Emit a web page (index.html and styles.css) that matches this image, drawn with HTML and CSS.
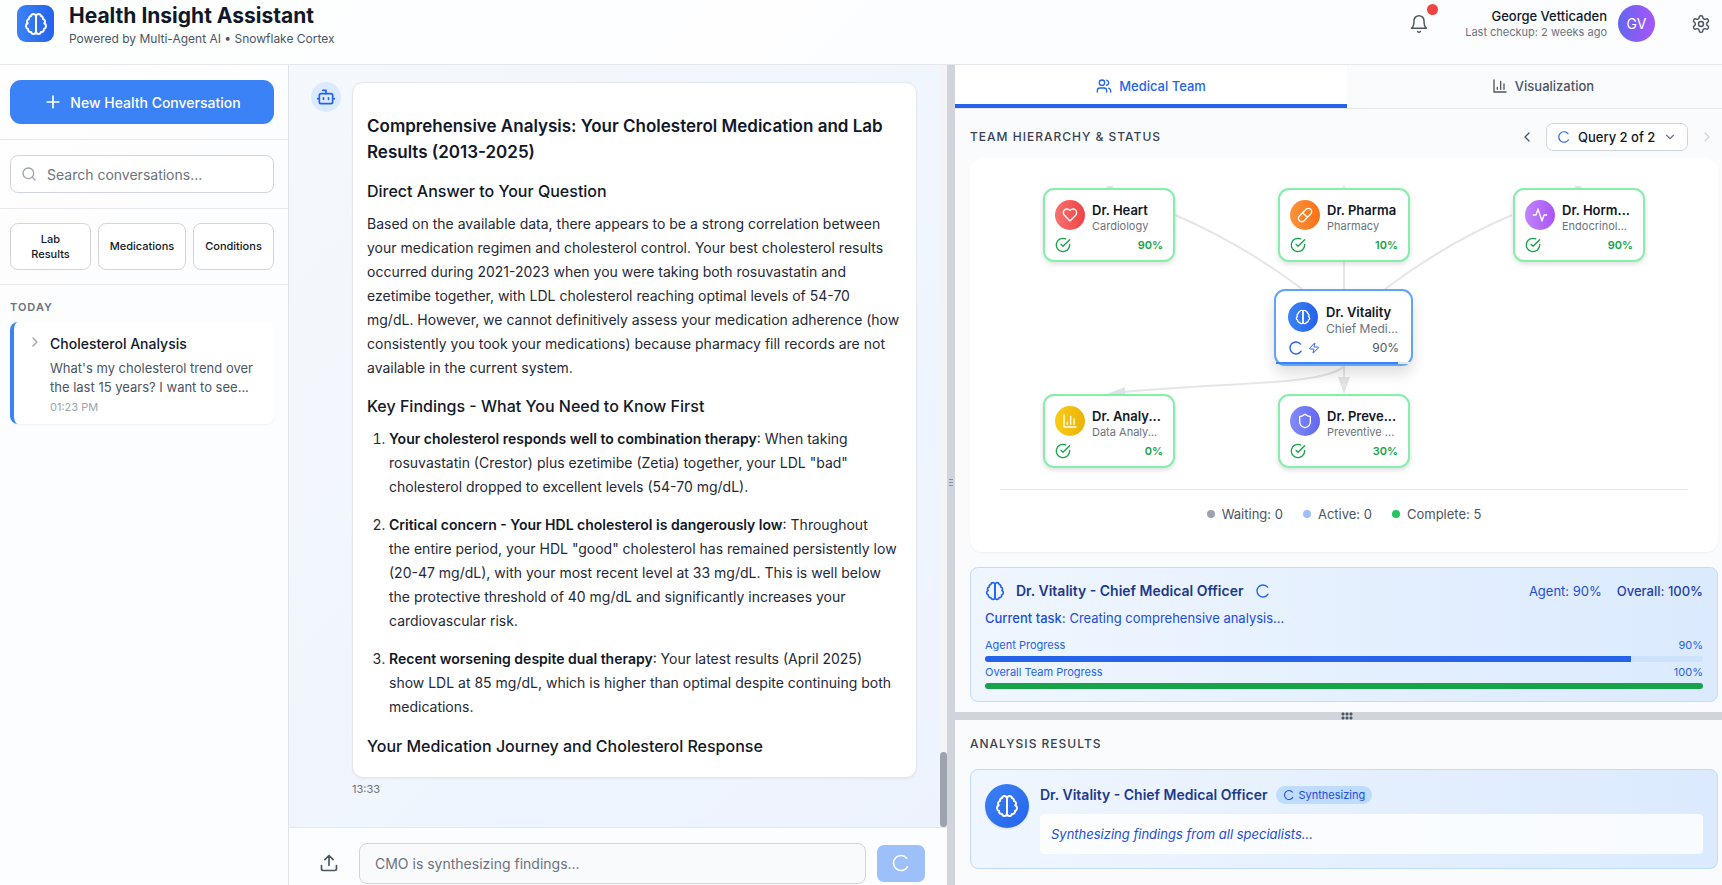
FILE: index.html
```html
<!DOCTYPE html>
<html lang="en">
<head>
<meta charset="utf-8">
<title>Health Insight Assistant</title>
<meta name="viewport" content="width=device-width, initial-scale=1">
<link rel="stylesheet" href="styles.css">
</head>
<body>
<svg class="sprite" aria-hidden="true">
  <symbol id="brain" viewBox="0 0 24 24"><path d="M9.5 2A2.5 2.5 0 0 1 12 4.5v15a2.5 2.5 0 0 1-4.96.44 2.5 2.5 0 0 1-2.96-3.08 3 3 0 0 1-.34-5.58 2.5 2.5 0 0 1 1.32-4.24 2.5 2.5 0 0 1 1.98-3A2.5 2.5 0 0 1 9.5 2Z"/><path d="M14.5 2A2.5 2.5 0 0 0 12 4.5v15a2.5 2.5 0 0 0 4.96.44 2.5 2.5 0 0 0 2.96-3.08 3 3 0 0 0 .34-5.58 2.5 2.5 0 0 0-1.32-4.24 2.5 2.5 0 0 0-1.98-3A2.5 2.5 0 0 0 14.5 2Z"/></symbol>
  <symbol id="bell" viewBox="0 0 24 24"><path d="M6 8a6 6 0 0 1 12 0c0 7 3 9 3 9H3s3-2 3-9"/><path d="M10.3 21a1.94 1.94 0 0 0 3.4 0"/></symbol>
  <symbol id="settings" viewBox="0 0 24 24"><path d="M12.22 2h-.44a2 2 0 0 0-2 2v.18a2 2 0 0 1-1 1.73l-.43.25a2 2 0 0 1-2 0l-.15-.08a2 2 0 0 0-2.73.73l-.22.38a2 2 0 0 0 .73 2.73l.15.1a2 2 0 0 1 1 1.72v.51a2 2 0 0 1-1 1.74l-.15.09a2 2 0 0 0-.73 2.73l.22.38a2 2 0 0 0 2.73.73l.15-.08a2 2 0 0 1 2 0l.43.25a2 2 0 0 1 1 1.73V20a2 2 0 0 0 2 2h.44a2 2 0 0 0 2-2v-.18a2 2 0 0 1 1-1.73l.43-.25a2 2 0 0 1 2 0l.15.08a2 2 0 0 0 2.73-.73l.22-.39a2 2 0 0 0-.73-2.73l-.15-.08a2 2 0 0 1-1-1.74v-.5a2 2 0 0 1 1-1.74l.15-.09a2 2 0 0 0 .73-2.73l-.22-.38a2 2 0 0 0-2.73-.73l-.15.08a2 2 0 0 1-2 0l-.43-.25a2 2 0 0 1-1-1.73V4a2 2 0 0 0-2-2z"/><circle cx="12" cy="12" r="3"/></symbol>
  <symbol id="plus" viewBox="0 0 24 24"><path d="M5 12h14M12 5v14"/></symbol>
  <symbol id="search" viewBox="0 0 24 24"><circle cx="11" cy="11" r="8"/><path d="m21 21-4.3-4.3"/></symbol>
  <symbol id="right" viewBox="0 0 24 24"><path d="m9 18 6-6-6-6"/></symbol>
  <symbol id="left" viewBox="0 0 24 24"><path d="m15 18-6-6 6-6"/></symbol>
  <symbol id="down" viewBox="0 0 24 24"><path d="m6 9 6 6 6-6"/></symbol>
  <symbol id="bot" viewBox="0 0 24 24"><path d="M12 8V4H8"/><rect width="16" height="12" x="4" y="8" rx="2"/><path d="M2 14h2M20 14h2M15 13v2M9 13v2"/></symbol>
  <symbol id="upload" viewBox="0 0 24 24"><path d="M21 15v4a2 2 0 0 1-2 2H5a2 2 0 0 1-2-2v-4M17 8l-5-5-5 5M12 3v12"/></symbol>
  <symbol id="loader" viewBox="0 0 24 24"><path d="M21 12a9 9 0 1 1-6.219-8.56" transform="rotate(32 12 12)"/></symbol>
  <symbol id="users" viewBox="0 0 24 24"><path d="M16 21v-2a4 4 0 0 0-4-4H6a4 4 0 0 0-4 4v2"/><circle cx="9" cy="7" r="4"/><path d="M22 21v-2a4 4 0 0 0-3-3.87M16 3.13a4 4 0 0 1 0 7.75"/></symbol>
  <symbol id="chart" viewBox="0 0 24 24"><path d="M3 3v18h18M18 17V9M13 17V5M8 17v-3"/></symbol>
  <symbol id="check" viewBox="0 0 24 24"><path d="M22 11.08V12a10 10 0 1 1-5.93-9.14"/><path d="m9 11 3 3L22 4"/></symbol>
  <symbol id="heart" viewBox="0 0 24 24"><path d="M19 14c1.49-1.46 3-3.21 3-5.5A5.5 5.5 0 0 0 16.5 3c-1.76 0-3 .5-4.5 2-1.5-1.5-2.74-2-4.5-2A5.5 5.5 0 0 0 2 8.5c0 2.3 1.5 4.05 3 5.5l7 7Z"/></symbol>
  <symbol id="pill" viewBox="0 0 24 24"><path d="m10.5 20.5 10-10a4.95 4.95 0 1 0-7-7l-10 10a4.95 4.95 0 1 0 7 7ZM8.5 8.5l7 7"/></symbol>
  <symbol id="activity" viewBox="0 0 24 24"><path d="M22 12h-4l-3 9L9 3l-3 9H2"/></symbol>
  <symbol id="shield" viewBox="0 0 24 24"><path d="M20 13c0 5-3.5 7.5-7.66 8.95a1 1 0 0 1-.67-.01C7.5 20.5 4 18 4 13V6a1 1 0 0 1 1-1c2 0 4.5-1.2 6.24-2.72a1.17 1.17 0 0 1 1.52 0C14.51 3.81 17 5 19 5a1 1 0 0 1 1 1z"/></symbol>
  <symbol id="zap" viewBox="0 0 24 24"><path d="M4 14a1 1 0 0 1-.78-1.63l9.9-10.2a.5.5 0 0 1 .86.46l-1.92 6.02A1 1 0 0 0 13 10h7a1 1 0 0 1 .78 1.63l-9.9 10.2a.5.5 0 0 1-.86-.46l1.92-6.02A1 1 0 0 0 11 14z"/></symbol>
</svg>

<header class="topbar">
  <div class="logo"><svg class="icon i24"><use href="#brain"/></svg></div>
  <div class="brand">
    <h1 class="brand-name">Health Insight Assistant</h1>
    <p class="brand-sub">Powered by Multi-Agent AI • Snowflake Cortex</p>
  </div>
  <button class="icon-btn bell" aria-label="Notifications"><svg class="icon i20"><use href="#bell"/></svg><span class="bell-dot"></span></button>
  <div class="user">
    <span class="user-name">George Vetticaden</span>
    <span class="user-sub">Last checkup: 2 weeks ago</span>
  </div>
  <div class="avatar">GV</div>
  <button class="icon-btn gear" aria-label="Settings"><svg class="icon i20"><use href="#settings"/></svg></button>
</header>

<div class="workspace">
  <aside class="sidebar">
    <div class="side-block">
      <button class="new-btn"><svg class="icon i20"><use href="#plus"/></svg>New Health Conversation</button>
    </div>
    <div class="side-block">
      <label class="search">
        <svg class="icon i16"><use href="#search"/></svg>
        <input type="text" aria-label="Search conversations" placeholder="Search conversations...">
      </label>
    </div>
    <div class="side-block chips">
      <button class="chip">Lab Results</button>
      <button class="chip">Medications</button>
      <button class="chip">Conditions</button>
    </div>
    <div class="history">
      <h2 class="history-title">Today</h2>
      <article class="convo">
        <svg class="icon i16 convo-arrow"><use href="#right"/></svg>
        <div>
          <h3 class="convo-title">Cholesterol Analysis</h3>
          <p class="convo-text">What's my cholesterol trend over the last 15 years? I want to see...</p>
          <time class="convo-time">01:23 PM</time>
        </div>
      </article>
    </div>
  </aside>

  <main class="chat">
    <div class="messages">
      <div class="thread">
        <div class="bot"><svg class="icon i20"><use href="#bot"/></svg></div>
        <div class="message">
          <div class="bubble">
            <h2>Comprehensive Analysis: Your Cholesterol Medication and Lab Results (2013-2025)</h2>
            <h3>Direct Answer to Your Question</h3>
            <p>Based on the available data, there appears to be a strong correlation between your medication regimen and cholesterol control. Your best cholesterol results occurred during 2021-2023 when you were taking both rosuvastatin and ezetimibe together, with LDL cholesterol reaching optimal levels of 54-70 mg/dL. However, we cannot definitively assess your medication adherence (how consistently you took your medications) because pharmacy fill records are not available in the current system.</p>
            <h3>Key Findings - What You Need to Know First</h3>
            <ol>
              <li><strong>Your cholesterol responds well to combination therapy</strong>: When taking rosuvastatin (Crestor) plus ezetimibe (Zetia) together, your LDL "bad" cholesterol dropped to excellent levels (54-70 mg/dL).</li>
              <li><strong>Critical concern - Your HDL cholesterol is dangerously low</strong>: Throughout<br>the entire period, your HDL "good" cholesterol has remained persistently low (20-47 mg/dL), with your most recent level at 33 mg/dL. This is well below the protective threshold of 40 mg/dL and significantly increases your cardiovascular risk.</li>
              <li><strong>Recent worsening despite dual therapy</strong>: Your latest results (April 2025) show LDL at 85 mg/dL, which is higher than optimal despite continuing both medications.</li>
            </ol>
            <h3>Your Medication Journey and Cholesterol Response</h3>
          </div>
          <time class="stamp">13:33</time>
        </div>
      </div>
      <div class="scroll-track"><div class="scroll-thumb"></div></div>
    </div>
    <form class="composer">
      <button type="button" class="icon-btn attach" aria-label="Upload"><svg class="icon i20"><use href="#upload"/></svg></button>
      <input class="composer-input" type="text" aria-label="Message" placeholder="CMO is synthesizing findings...">
      <button type="button" class="send" aria-label="Send"><svg class="icon i20"><use href="#loader"/></svg></button>
    </form>
  </main>

  <div class="split-v"><span class="grip-v"></span></div>

  <div class="right">
   <div class="right-inner">
    <nav class="tabs">
      <button class="tab tab-on"><svg class="icon i16"><use href="#users"/></svg>Medical Team</button>
      <button class="tab"><svg class="icon i16"><use href="#chart"/></svg>Visualization</button>
    </nav>

    <section class="team">
      <div class="team-head">
        <h2 class="section-title">Team Hierarchy &amp; Status</h2>
        <button class="icon-btn step" aria-label="Previous query"><svg class="icon i16"><use href="#left"/></svg></button>
        <div class="query">
          <svg class="icon i14 blue"><use href="#loader"/></svg>
          <select aria-label="Query"><option>Query 2 of 2</option></select>
          <svg class="icon i14 gray"><use href="#down"/></svg>
        </div>
        <button class="icon-btn step step-off" aria-label="Next query"><svg class="icon i16"><use href="#right"/></svg></button>
      </div>

      <div class="board">
        <div class="canvas">
          <svg class="links" width="620" height="316" viewBox="1034 173 620 316">
            <path d="M1107 187h6M1344 186v4M1575 187h6M1175 215C1215 232 1262 259 1302 289M1512 215C1472 232 1425 259 1385 289M1344 260V290M1344 366V378M1344 366C1326 385 1235 382 1124 392"/>
            <path class="tip" d="M1338 377h12l-6 17zM1125 387v12l-18-5z"/>
          </svg>
          <div class="node n-heart">
            <span class="face red"><svg class="icon i16"><use href="#heart"/></svg></span>
            <div class="who"><b>Dr. Heart</b><span>Cardiology</span></div>
            <div class="state"><svg class="icon i16"><use href="#check"/></svg><em>90%</em></div>
          </div>
          <div class="node n-pharma">
            <span class="face orange"><svg class="icon i16"><use href="#pill"/></svg></span>
            <div class="who"><b>Dr. Pharma</b><span>Pharmacy</span></div>
            <div class="state"><svg class="icon i16"><use href="#check"/></svg><em>10%</em></div>
          </div>
          <div class="node n-horm">
            <span class="face purple"><svg class="icon i16"><use href="#activity"/></svg></span>
            <div class="who"><b>Dr. Horm...</b><span>Endocrinol...</span></div>
            <div class="state"><svg class="icon i16"><use href="#check"/></svg><em>90%</em></div>
          </div>
          <div class="node n-chief">
            <span class="face navy"><svg class="icon i16"><use href="#brain"/></svg></span>
            <div class="who"><b>Dr. Vitality</b><span>Chief Medi...</span></div>
            <div class="state"><svg class="icon i16"><use href="#loader"/></svg><svg class="icon i12"><use href="#zap"/></svg><em>90%</em></div>
            <div class="node-bar"><i style="width:90%"></i></div>
          </div>
          <div class="node n-data">
            <span class="face yellow"><svg class="icon i16"><use href="#chart"/></svg></span>
            <div class="who"><b>Dr. Analy...</b><span>Data Analy...</span></div>
            <div class="state"><svg class="icon i16"><use href="#check"/></svg><em>0%</em></div>
          </div>
          <div class="node n-prev">
            <span class="face indigo"><svg class="icon i16"><use href="#shield"/></svg></span>
            <div class="who"><b>Dr. Preve...</b><span>Preventive ...</span></div>
            <div class="state"><svg class="icon i16"><use href="#check"/></svg><em>30%</em></div>
          </div>
        </div>
        <ul class="legend">
          <li><i class="dot dot-wait"></i>Waiting: 0</li>
          <li><i class="dot dot-act"></i>Active: 0</li>
          <li><i class="dot dot-done"></i>Complete: 5</li>
        </ul>
      </div>

      <div class="panel chief">
        <div class="chief-head">
          <svg class="icon i20 blue"><use href="#brain"/></svg>
          <h3 class="panel-title">Dr. Vitality - Chief Medical Officer</h3>
          <svg class="icon i16 blue"><use href="#loader"/></svg>
          <span class="agent-pct">Agent: 90%</span>
          <span class="overall-pct">Overall: 100%</span>
        </div>
        <p class="task"><b>Current task:</b> Creating comprehensive analysis...</p>
        <div class="meter-label"><span>Agent Progress</span><span>90%</span></div>
        <div class="meter"><i style="width:90%"></i></div>
        <div class="meter-label"><span>Overall Team Progress</span><span>100%</span></div>
        <div class="meter meter-green"><i style="width:100%"></i></div>
      </div>
    </section>

    <div class="split-h"><span class="grip"></span></div>

    <section class="results">
      <h2 class="section-title">Analysis Results</h2>
      <div class="panel result">
        <span class="result-face"><svg class="icon i24"><use href="#brain"/></svg></span>
        <div class="result-body">
          <div class="result-head">
            <h3 class="panel-title">Dr. Vitality - Chief Medical Officer</h3>
            <span class="badge"><svg class="icon i12"><use href="#loader"/></svg>Synthesizing</span>
          </div>
          <p class="finding">Synthesizing findings from all specialists...</p>
        </div>
      </div>
    </section>
   </div>
  </div>
</div>
</body>
</html>
```
FILE: styles.css
```css
* { box-sizing: border-box; margin: 0; padding: 0; }
body {
  height: 100vh;
  display: flex;
  flex-direction: column;
  overflow: hidden;
  font-family: Inter, "Liberation Sans", sans-serif;
  font-size: 14px;
  color: #111827;
  background: linear-gradient(135deg, #f7f9fb 0%, #eff5fe 50%, #ebeefb 100%);
}
button, input, select { font: inherit; color: inherit; }
button { background: none; border: 0; cursor: pointer; }
i, em { font-style: normal; }
.sprite { display: none; }
.icon { flex: none; display: block; fill: none; stroke: currentColor; stroke-width: 2; stroke-linecap: round; stroke-linejoin: round; }
.i12 { width: 12px; height: 12px; }
.i14 { width: 14px; height: 14px; }
.i16 { width: 16px; height: 16px; }
.i20 { width: 20px; height: 20px; }
.i24 { width: 24px; height: 24px; }
.blue { color: #2563eb; }
.gray { color: #6b7280; }
.icon-btn { display: flex; align-items: center; justify-content: center; color: #4b5563; }

/* Top bar */
.topbar {
  flex: none;
  display: flex;
  align-items: center;
  height: 65px;
  padding: 0 11px 17px 17px;
  background: rgba(255, 255, 255, 0.8);
  border-bottom: 1px solid #e5e7eb;
}
.topbar .i20 { stroke-width: 1.75; }
.logo { display: flex; align-items: center; justify-content: center; width: 37px; height: 37px; border-radius: 9px; color: #fff; background: linear-gradient(90deg, #3b82f6, #2563eb); }
.brand { margin-left: 15px; margin-right: auto; padding-top: 2px; }
.brand-name { font-size: 21px; line-height: 28px; font-weight: 700; }
.brand-sub { font-size: 12px; line-height: 18px; color: #4b5563; }
.bell { position: relative; width: 37px; height: 37px; margin-right: 28px; }
.bell-dot { position: absolute; top: -1px; right: -1px; width: 11px; height: 11px; border-radius: 50%; background: #ef4444; }
.user { display: flex; flex-direction: column; text-align: right; margin-right: 11px; }
.user-name { font-size: 13px; line-height: 18px; font-weight: 500; }
.user-sub { font-size: 11px; line-height: 15px; color: #6b7280; }
.avatar { display: flex; align-items: center; justify-content: center; width: 37px; height: 37px; border-radius: 50%; color: #fff; background: linear-gradient(90deg, #6366f1, #a855f7); margin-right: 36px; }

.workspace { flex: 1; min-height: 0; display: flex; }

/* Sidebar */
.sidebar { flex: none; width: 289px; border-right: 1px solid #e0e4ea; background: rgba(255, 255, 255, 0.75); }
.side-block { padding: 15px 14px 15px 10px; border-bottom: 1px solid #e5e7eb; }
.new-btn { display: flex; align-items: center; justify-content: center; gap: 7px; width: 100%; height: 44px; border-radius: 11px; background: #3b82f6; color: #fff; font-size: 14px; font-weight: 500; }
.search { display: flex; align-items: center; gap: 10px; height: 38px; padding: 0 10px; border: 1px solid #d1d5db; border-radius: 8px; background: #fff; color: #9ca3af; }
.search input { flex: 1; min-width: 0; border: 0; outline: 0; background: none; font-size: 14px; }
input::placeholder { color: #6b7280; opacity: 1; }
.side-block.chips { display: grid; grid-template-columns: 81px 88px 81px; justify-content: space-between; padding-top: 14px; padding-bottom: 14px; }
.chip { height: 47px; padding: 0 14px; border: 1px solid #d1d5db; border-radius: 8px; background: #fff; font-size: 11px; line-height: 15px; font-weight: 500; display: flex; align-items: center; justify-content: center; }
.history { padding: 15px 14px 0 10px; }
.history-title { font-size: 11px; line-height: 15px; font-weight: 600; letter-spacing: 1px; text-transform: uppercase; color: #6b7280; margin-bottom: 7px; }
.convo { display: flex; gap: 7px; padding: 12px 14px 9px 13px; border-left: 4px solid #3b82f6; border-radius: 8px; background: #fff; box-shadow: 0 1px 2px rgba(0, 0, 0, 0.05); }
.convo-arrow { color: #9ca3af; }
.convo-title { font-size: 14px; line-height: 20px; font-weight: 500; margin-bottom: 5px; }
.convo-text { font-size: 13px; line-height: 19px; color: #4b5563; margin-bottom: 3px; }
.convo-time { display: block; font-size: 11px; line-height: 15px; color: #9ca3af; }

/* Chat */
.chat { flex: 658; min-width: 0; display: flex; flex-direction: column; }
.messages { flex: 1; min-height: 0; display: flex; overflow: hidden; }
.thread { flex: 1; min-width: 0; display: flex; align-items: flex-start; gap: 11px; padding: 17px 23px 0 22px; }
.bot { flex: none; display: flex; align-items: center; justify-content: center; width: 30px; height: 30px; border-radius: 50%; background: #dbeafe; color: #2563eb; }
.message { flex: 1; min-width: 0; }
.bubble { padding: 30px 16px 10px 14px; border: 1px solid #e5e7eb; border-radius: 11px; background: #fff; color: #1f2937; line-height: 24px; box-shadow: 0 1px 2px rgba(0, 0, 0, 0.05); }
.bubble h2 { font-size: 17px; line-height: 26px; font-weight: 600; color: #111827; margin-bottom: 13px; }
.bubble h3 { font-size: 16px; line-height: 26px; font-weight: 500; color: #111827; margin-bottom: 8px; }
.bubble p { margin-bottom: 13px; }
.bubble ol { padding-left: 22px; margin-bottom: 14px; }
.bubble li + li { margin-top: 14px; }
.bubble strong { font-weight: 600; color: #111827; }
.stamp { display: block; font-size: 11px; line-height: 15px; margin-top: 4px; color: #6b7280; }
.scroll-track { flex: none; width: 7px; display: flex; align-items: flex-end; background: #f3f4f6; }
.scroll-thumb { width: 7px; height: 75px; border-radius: 4px; background: #9ca3af; }
.composer { flex: none; height: 58px; display: flex; align-items: center; padding: 14px 22px 1px 30px; border-top: 1px solid #e5e7eb; background: rgba(255, 255, 255, 0.8); }
.attach { width: 20px; height: 37px; margin-right: 20px; }
.composer-input { flex: 1; min-width: 0; height: 41px; padding: 0 15px; border: 1px solid #d1d5db; border-radius: 8px; background: #f9fafb; font-size: 14px; outline: 0; margin-right: 11px; }
.send { width: 48px; height: 37px; display: flex; align-items: center; justify-content: center; border-radius: 7px; background: #9dc0fb; color: #fff; }

/* Splitters */
.split-v { flex: none; width: 8px; display: flex; align-items: center; justify-content: center; padding-top: 15px; background: #d1d5db; }
.split-h { flex: none; height: 8px; display: flex; align-items: center; justify-content: center; background: #d1d5db; }
.grip { width: 12px; height: 8px; background: radial-gradient(circle, #4b5563 1px, transparent 2px) 0 0 / 4px 4px; }
.grip-v { width: 4px; height: 7px; background: repeating-linear-gradient(#8b93a0 0 1px, transparent 1px 3px); }

/* Right pane: slightly wider than its slot, clipped by the window edge */
.right { flex: 767; min-width: 0; overflow: hidden; background: #fafbfd; }
.right-inner { width: calc(100% + 17px); height: 100%; display: flex; flex-direction: column; }
.tabs { flex: none; display: flex; height: 44px; border-bottom: 1px solid #e5e7eb; }
.tab { flex: 1; display: flex; align-items: center; justify-content: center; gap: 7px; font-size: 13px; font-weight: 500; color: #4b5563; border-bottom: 4px solid transparent; padding-top: 2px; }
.tab-on { color: #2563eb; background: #fff; border-bottom-color: #2563eb; }
.team { flex: none; padding: 14px 21px 10px 15px; }
.team-head { display: flex; align-items: center; height: 28px; margin-bottom: 7px; }
.section-title { font-size: 12px; line-height: 18px; font-weight: 500; letter-spacing: 1px; text-transform: uppercase; color: #374151; margin-right: auto; }
.step { width: 16px; height: 28px; }
.step-off { color: #d1d5db; margin-right: 3px; }
.query { display: flex; align-items: center; gap: 7px; height: 28px; margin: 0 11px; padding: 0 10px; border: 1px solid #d1d5db; border-radius: 7px; background: #fff; }
.query select { appearance: none; border: 0; outline: 0; background: none; font-size: 13px; font-weight: 500; }
.board { padding: 15px 30px 29px; border-radius: 12px; background: #fff; box-shadow: 0 1px 2px rgba(0, 0, 0, 0.05); margin-bottom: 15px; }
.canvas { position: relative; height: 317px; border-bottom: 1px solid #e5e7eb; }
.links { position: absolute; top: 0; left: calc(50% - 310px); fill: none; stroke: #e5e5ea; stroke-width: 2; }
.links .tip { fill: #e2e3e8; stroke: none; }
.node { position: absolute; width: 132px; height: 74px; display: grid; grid-template-columns: 30px 1fr; gap: 3px 7px; align-content: start; padding: 10px; border: 2px solid #86efac; border-radius: 11px; background: #fff; box-shadow: 0 2px 5px rgba(0, 0, 0, 0.14); }
.n-heart { left: calc(50% - 301px); top: 15px; }
.n-pharma { left: calc(50% - 66px); top: 15px; }
.n-horm { left: calc(50% + 169px); top: 15px; }
.n-data { left: calc(50% - 301px); top: 221px; }
.n-prev { left: calc(50% - 66px); top: 221px; }
.n-chief { left: calc(50% - 70px); top: 116px; width: 139px; height: 77px; padding: 11px 12px; column-gap: 8px; border-color: #60a5fa; box-shadow: 0 8px 14px rgba(0, 0, 0, 0.13); }
.face { display: flex; align-items: center; justify-content: center; width: 30px; height: 30px; border-radius: 50%; color: #fff; }
.red { background: linear-gradient(90deg, #f87171, #ef4444); }
.orange { background: linear-gradient(90deg, #fb923c, #f97316); }
.purple { background: linear-gradient(90deg, #c084fc, #a855f7); }
.navy { background: linear-gradient(90deg, #3b82f6, #2563eb); }
.yellow { background: linear-gradient(90deg, #facc15, #eab308); }
.indigo { background: linear-gradient(90deg, #818cf8, #6366f1); }
.who { min-width: 0; display: flex; flex-direction: column; padding-top: 1px; white-space: nowrap; }
.who b { font-size: 13px; line-height: 18px; font-weight: 600; }
.who span { font-size: 11px; line-height: 15px; color: #6b7280; }
.state { grid-column: 1 / 3; display: flex; align-items: center; gap: 4px; line-height: 16px; color: #16a34a; }
.state em { margin-left: auto; font-size: 11px; font-weight: 600; }
.n-chief .who span { font-size: 12px; line-height: 16px; }
.n-chief .state { color: #2563eb; }
.n-chief em { color: #4b5563; font-size: 12px; font-weight: 400; }
.node-bar { position: absolute; left: 0; right: 0; bottom: 0; height: 2px; background: #e5e7eb; }
.node-bar i { display: block; height: 2px; background: #3b82f6; }
.legend { display: flex; justify-content: center; gap: 20px; padding-top: 15px; list-style: none; font-size: 13px; line-height: 18px; color: #4b5563; }
.legend li { display: flex; align-items: center; gap: 7px; }
.dot { width: 8px; height: 8px; border-radius: 50%; }
.dot-wait { background: #9ca3af; }
.dot-act { background: #9dc0fb; }
.dot-done { background: #22c55e; }

.panel { border: 1px solid #bfdbfe; border-radius: 8px; background: linear-gradient(90deg, #eff6ff, #dbeafe); }
.panel-title { font-size: 14px; line-height: 20px; font-weight: 600; color: #1e3a8a; }
.chief { padding: 13px 14px 9px; color: #2563eb; }
.chief-head { display: flex; align-items: center; gap: 11px; }
.agent-pct { margin-left: auto; font-size: 13px; color: #1d4ed8; }
.overall-pct { margin-left: 4px; font-size: 13px; font-weight: 500; color: #1e40af; }
.task { font-size: 13px; line-height: 18px; margin: 8px 0 11px; color: #1d4ed8; }
.task b { font-weight: 500; }
.meter-label { display: flex; justify-content: space-between; font-size: 11px; line-height: 15px; margin-bottom: 3px; }
.meter { height: 6px; border-radius: 3px; overflow: hidden; background: #cfe2fd; margin-bottom: 3px; }
.meter i { display: block; height: 6px; background: #2563eb; }
.meter-green i { background: #16a34a; }

.results { flex: 1; padding: 15px 21px 15px 15px; }
.result { display: flex; gap: 11px; margin-top: 16px; padding: 14px; }
.result-face { flex: none; display: flex; align-items: center; justify-content: center; width: 44px; height: 44px; border-radius: 50%; color: #fff; background: linear-gradient(135deg, #3b82f6, #2563eb); box-shadow: 0 1px 2px rgba(0, 0, 0, 0.1); }
.result-body { flex: 1; }
.result-head { display: flex; align-items: center; gap: 8px; height: 22px; margin-bottom: 8px; }
.badge { display: flex; align-items: center; gap: 4px; height: 18px; padding: 0 7px; border-radius: 9px; background: #bfdbfe; color: #1d4ed8; font-size: 11px; }
.finding { padding: 11px; line-height: 18px; font-size: 13px; font-style: italic; color: #1d4ed8; border-radius: 4px; background: rgba(255, 255, 255, 0.8); }
```
